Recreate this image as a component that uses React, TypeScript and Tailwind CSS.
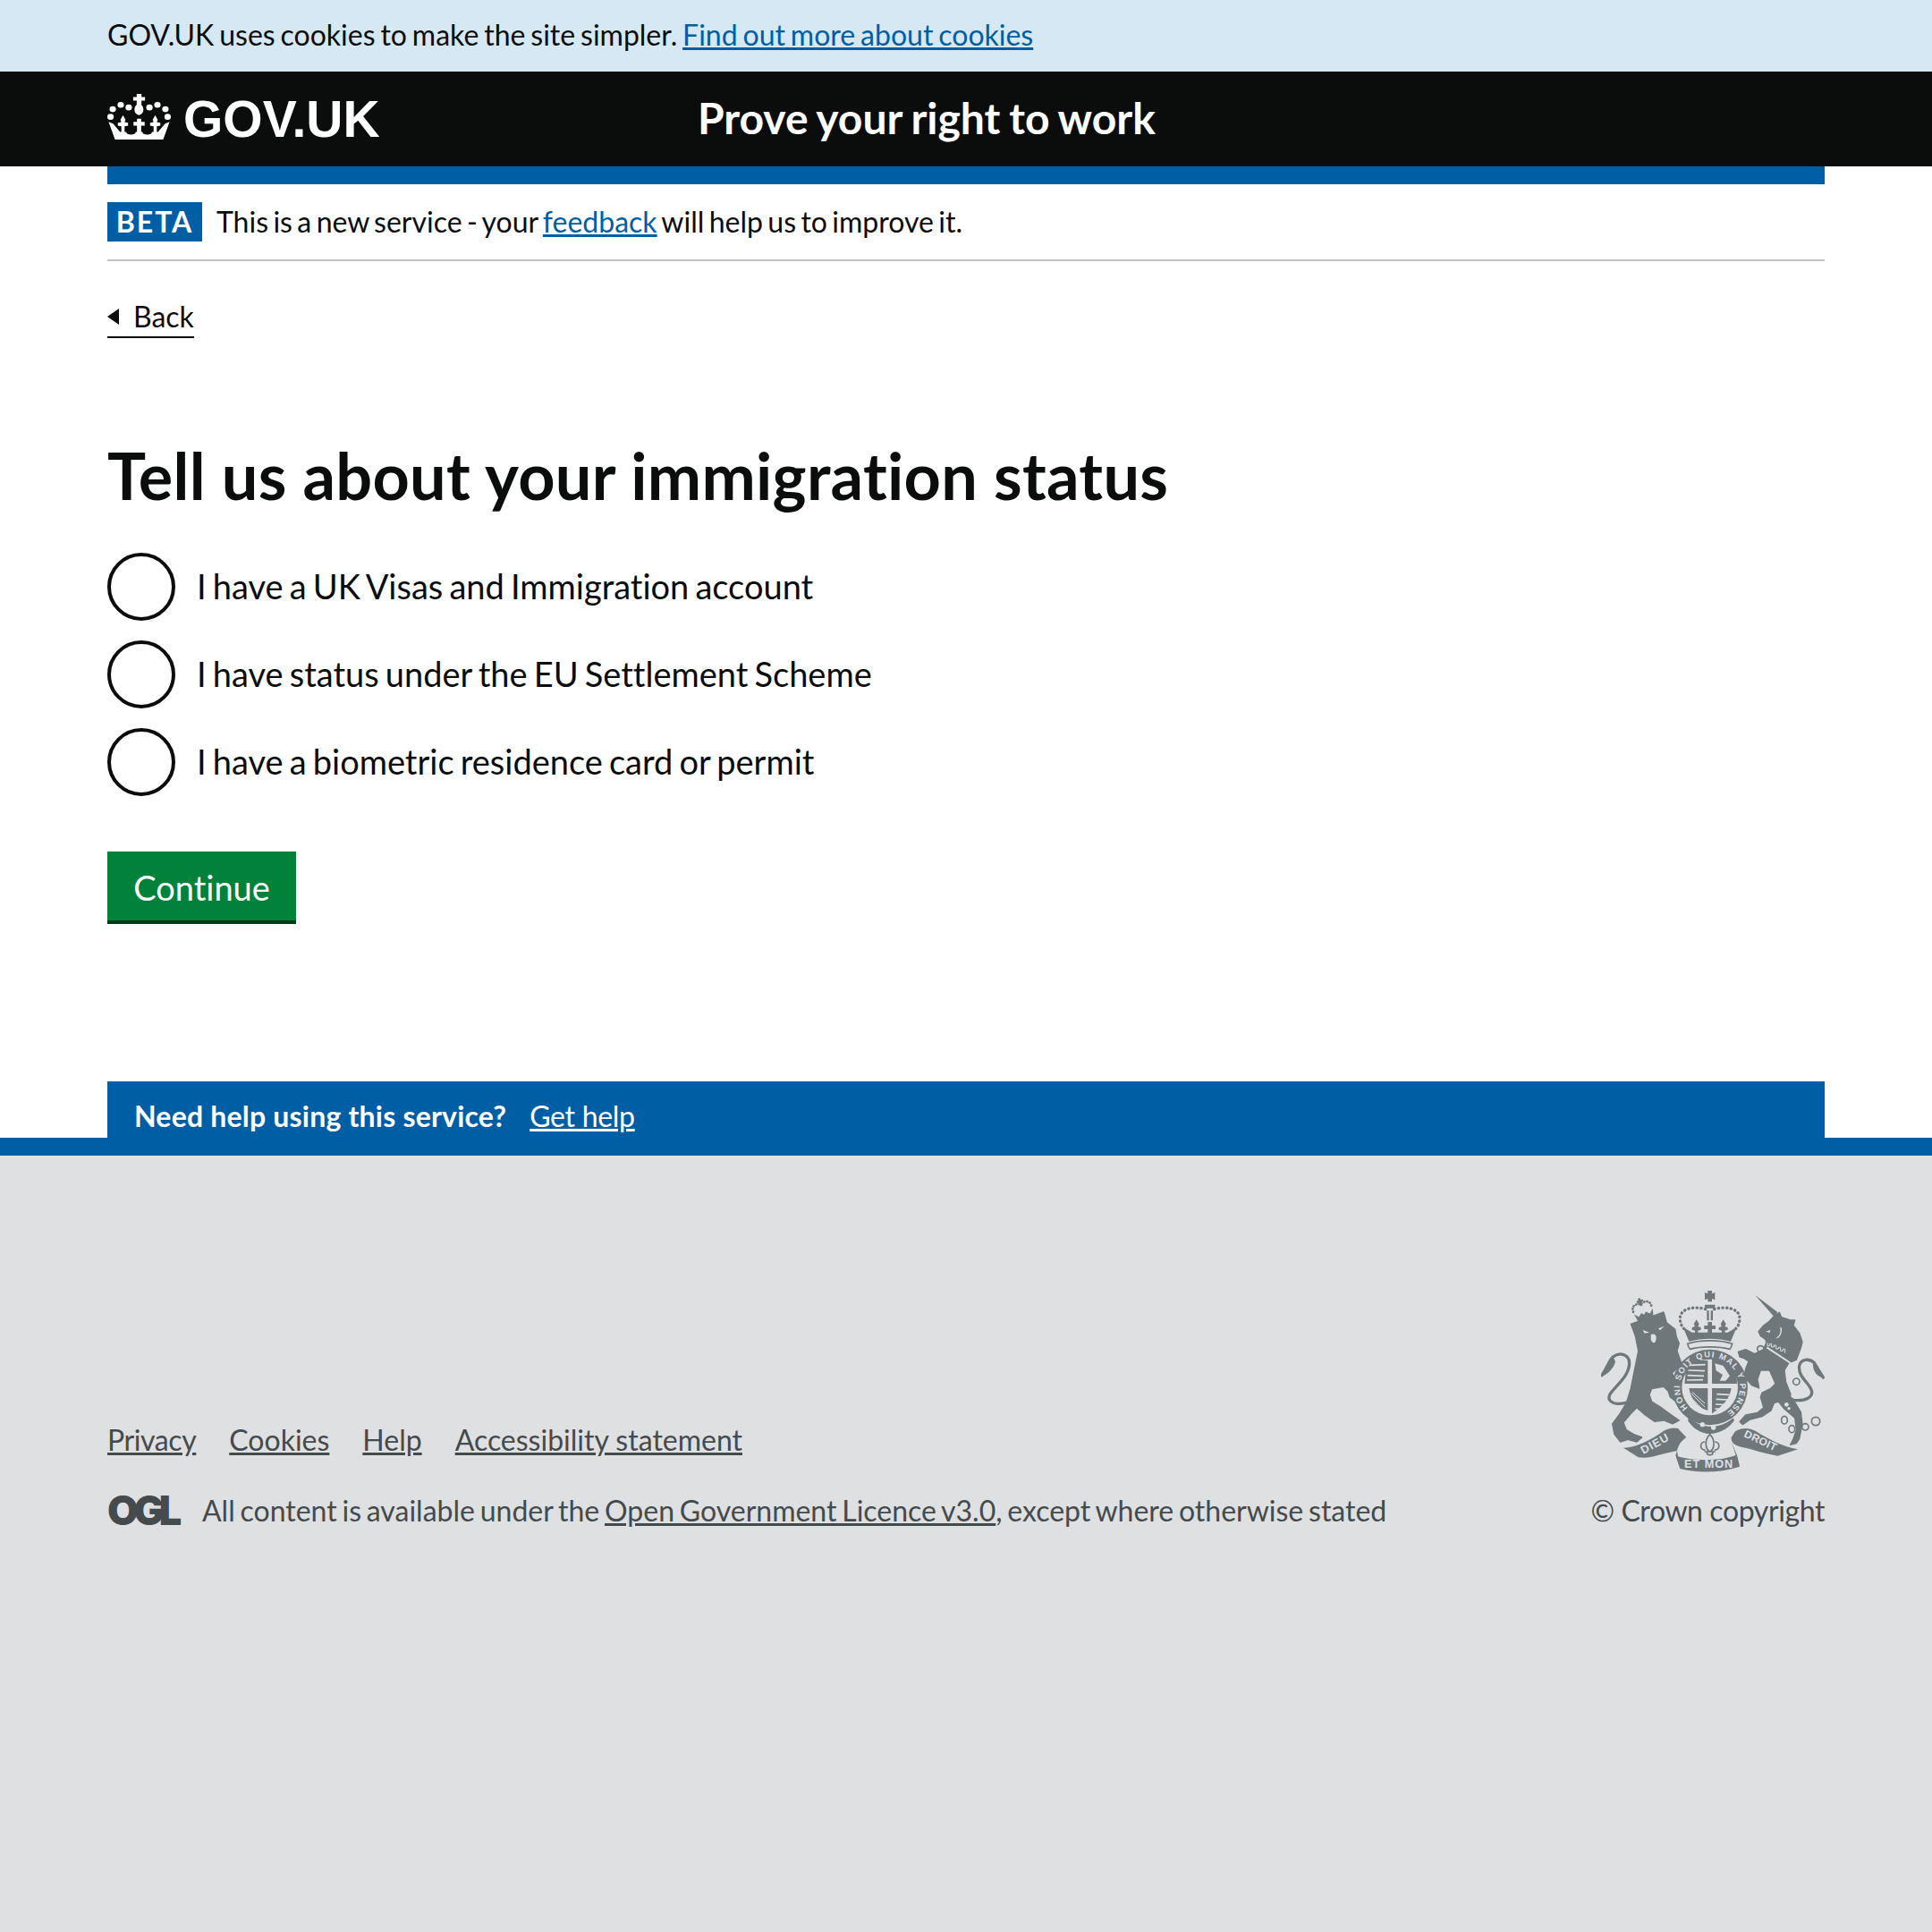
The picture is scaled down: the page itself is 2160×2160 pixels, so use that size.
const font = "font-['Lato','Liberation_Sans',sans-serif]";
const grey = '#6f777b';
const bg = '#dee0e2';

function Crown() {
  return (
    <svg viewBox="23 20 199 155" preserveAspectRatio="none" className="w-[71px] h-[51px] mb-[5px] fill-white" aria-hidden="true">
      {/* top cross and orb */}
      <path d="M115 20h15v11h11v12h-11v14h-15V43h-11V31h11z" />
      <ellipse cx="122" cy="73" rx="14" ry="19" />
      {/* pearls */}
      <circle cx="90" cy="66" r="10" />
      <circle cx="65" cy="57" r="10" />
      <circle cx="40" cy="72" r="10" />
      <circle cx="33" cy="98" r="10" />
      <circle cx="155" cy="66" r="10" />
      <circle cx="180" cy="57" r="10" />
      <circle cx="205" cy="72" r="10" />
      <circle cx="212" cy="98" r="10" />
      {/* base */}
      <path d="M27 115l14 6 22 28h119l22-28 14-6-20 60H47z" />
      <ellipse cx="97" cy="150" rx="15" ry="8" fill="#0b0c0c" />
      <ellipse cx="148" cy="150" rx="15" ry="8" fill="#0b0c0c" />
      {/* fleurs */}
      <path d="M72 92l8 16-3 8 11 2v10l-11 2v22H67v-22l-11-2v-10l11-2-3-8z" />
      <path d="M173 92l8 16-3 8 11 2v10l-11 2v22h-10v-22l-11-2v-10l11-2-3-8z" />
      <path d="M116 104h13v11h11v13h-11v24h-13v-24h-11v-13h11z" />
    </svg>
  );
}

function Crest() {
  return (
    <svg viewBox="90 35 750 615" className="w-[250px] h-[205px]" fill={grey} aria-hidden="true">
      {/* lion, traced in the left half */}
      <g transform="translate(60 15)" strokeLinejoin="round">
        <g transform="rotate(-18 172 95)">
          <path d="M140 92l12 14 12-10 8 8 8-8 12 10 13-14-6 32h-53z" />
          <path d="M140 84c-2-24 22-24 32-16 10-8 34-8 32 16" fill="none" stroke={grey} strokeWidth="8" strokeLinecap="round" strokeDasharray="1 9" />
          <path d="M168 46h8v7h7v8h-7v12h-8V61h-7v-8h7z" />
        </g>
        <path
          d="M130 135L240 95 250 130 278 152 283 178 292 200 285 225 300 268 268 300 300 350 308 385 285 398 262 380 255 360 240 345 200 352 192 372 200 395 232 415 262 437 292 458 270 470 240 458 210 462 178 440 150 415 135 430 105 465 115 490 140 505 167 515 150 530 120 522 95 530 75 505 68 470 90 440 115 400 130 350 142 290 155 225 145 175z"
          stroke={grey}
          strokeWidth="4"
        />
        <path d="M170 155l22 8-16 3zM222 150l20-8-14 14zM197 170c10-4 18 0 18 10s-3 18-8 18-10-8-10-16z" fill={bg} />
        <path d="M125 395C85 410 45 400 60 370 80 340 125 310 125 265 125 240 95 225 70 245 55 260 50 285 30 310" fill="none" stroke={grey} strokeWidth="10" />
        <path d="M30 312c12-25 22-45 42-65l6 14c-6 22-22 40-48 51z" />
      </g>

      {/* unicorn, traced in the right half */}
      <g transform="translate(420 15)" strokeLinejoin="round">
        <path d="M187 38l75 57-12 15z" />
        <path
          d="M250 108L268 96 275 112 305 122 320 122 315 140 335 165 345 195 340 215 325 255 300 265 285 290 290 330 310 380 340 430 345 470 335 520 325 535 305 540 315 520 325 490 320 450 285 420 265 395 250 400 240 425 210 445 170 455 145 472 135 462 155 440 195 432 215 415 205 380 210 365 240 350 255 335 235 290 205 290 195 320 200 350 175 340 150 310 155 285 165 260 150 250 135 245 130 228 155 220 185 235 215 220 225 195 220 185 205 175 198 160 215 140 235 125z"
          stroke={grey}
          strokeWidth="4"
        />
        <path d="M226 213l80 53" fill="none" stroke={bg} strokeWidth="6" />
        <path d="M228 198v10h8v-7h6v11h8v-6h7v12h8v-5h7v12h8v-6h7v13" fill="none" stroke={bg} strokeWidth="3" />
        <path d="M222 160l16-5-2 9zM270 145c5 15 0 28-14 38 12 0 22-15 20-35z" fill={bg} />
        <circle cx="315" cy="375" r="8" fill={bg} />
        <circle cx="292" cy="405" r="7" fill={bg} />
        <circle cx="300" cy="418" r="5" fill={bg} />
        <path d="M315 390c40 5 70-10 60-35-10-25-45-45-40-80 5-25 35-25 50-10 10 15 20 35 33 53" fill="none" stroke={grey} strokeWidth="10" />
        <path d="M420 318c-18-5-32-15-38-35l-2-16c14 12 30 30 40 51z" />
        <g fill="none" stroke={grey} strokeWidth="5">
          <ellipse cx="205" cy="218" rx="11" ry="10" />
          <ellipse cx="180" cy="302" rx="10" ry="12" />
          <ellipse cx="325" cy="328" rx="11" ry="11" />
          <ellipse cx="285" cy="457" rx="10" ry="13" />
          <ellipse cx="310" cy="487" rx="10" ry="12" />
          <ellipse cx="355" cy="480" rx="11" ry="11" />
          <ellipse cx="390" cy="461" rx="14" ry="14" />
        </g>
      </g>

      {/* royal crown */}
      <path d="M448 38h14v10l10-4v25l-10-4v10h-14V65l-10 4V44l10 4z" />
      <path d="M438 85h34v12h-34zM445 105h7v33h-7zM458 105h7v33h-7z" />
      <path d="M440 100C400 88 352 98 355 135c2 20 10 26 14 32M470 100c40-12 88-2 85 35-2 20-10 26-14 32" fill="none" stroke={grey} strokeWidth="10" strokeLinecap="round" strokeDasharray="1 13" />
      <path d="M365 160l30 18h120l30-18-20 48c-45-12-95-12-140 0z" />
      <path d="M410 135l9 15-4 8 10 3v8l-10 3v15h-10v-15l-10-3v-8l10-3-4-8zM500 135l9 15-4 8 10 3v8l-10 3v15h-10v-15l-10-3v-8l10-3-4-8zM448 143h14v12h12v12h-12v15h-14v-15h-12v-12h12z" />
      <path d="M380 216c40-14 110-14 150 0-2 8-3 12-8 18-35-10-100-10-134 0-5-6-6-10-8-18z" fill="none" stroke={grey} strokeWidth="5" />

      {/* shield and garter */}
      <circle cx="455" cy="362" r="127" />
      <circle cx="455" cy="362" r="94" fill={bg} />
      <path d="M378 272h70v78h-78zM462 268h78l6 82h-84zM385 365h63v75c-30-8-55-30-63-75zM462 365h65c-6 35-28 60-65 85z" />
      <g fill="none" stroke={bg} strokeWidth="5">
        <path d="M385 288l55-2M382 305l56 2M380 322l55 2M378 338l54-1" />
        <path d="M478 385l42 2M476 402l40 2M474 419l34 2M472 434l28 2" />
        <path d="M392 382l46 46M392 396l40 42M396 378l42 38" strokeWidth="3" />
      </g>
      <path d="M472 282l28 8 22 34-14 16h-20l10-20-22-14z" fill={bg} />
      <text fontFamily="'Liberation Sans',sans-serif" fontWeight="700" fontSize="28" fill={bg}>
        <path id="garter" d="M381 431A101 101 0 1 1 517 442" fill="none" />
        <textPath href="#garter" textLength="490" lengthAdjust="spacing">HONI SOIT QUI MAL Y PENSE</textPath>
      </text>
      <path d="M385 462c40 42 105 42 148 3l4 8c-10 15-40 45-82 45-30 0-60-20-74-45z" />
      <circle cx="430" cy="487" r="8" fill={bg} />
      <circle cx="467" cy="497" r="8" fill={bg} />

      {/* fleur de lis */}
      <g fill="none" stroke={grey} strokeWidth="5">
        <path d="M455 520c-20 20-15 50 0 58 15-8 20-38 0-58zM438 545c-18 0-18 30 2 27M472 545c18 0 18 30-2 27M437 578h36M445 580c0 12 20 12 20 0" />
      </g>

      {/* motto ribbon */}
      <path d="M165 565c40 0 90-25 135-57 20-10 35-11 48-8l28 30c-14 10-26 22-31 45-25 5-45 10-65 15-25 8-45 10-65 7z" />
      <path d="M340 590c40 20 160 22 205-2l10 40c-65 22-145 22-200 7z" />
      <path d="M540 510c25-15 50-12 70 0 40 25 90 53 140 60l-68 22c-42-7-82-22-122-30-20-4-35-14-33-32z" />
      <path d="M345 575l-5 15 15 45zM527 545l18 43 10 40z" />
      <g fontFamily="'Liberation Sans',sans-serif" fontWeight="700" fill={bg}>
        <text x="369" y="633" fontSize="38" letterSpacing="3">ET MON</text>
        <text transform="translate(232 587) rotate(-29)" fontSize="38" letterSpacing="3">DIEU</text>
        <text transform="translate(567 527) rotate(25)" fontSize="36" letterSpacing="1">DROIT</text>
      </g>
    </svg>
  );
}

export default function App() {
  return (
    <div className={`min-h-[2160px] flex flex-col bg-white text-[#0b0c0c] [font-variant-ligatures:none] ${font}`}>
      <div className="h-20 bg-[#d5e8f3] px-[120px] pb-0.5 flex items-center text-[32px] [word-spacing:-2.3px]">
        <p>
          GOV.UK uses cookies to make the site simpler.{' '}
          <a className="text-[#005ea5] underline">Find out more about cookies</a>
        </p>
      </div>

      <header className="h-[106px] bg-[#0b0c0c] px-[120px] flex items-center text-white">
        <div className="w-[660px] flex items-center gap-[14px]">
          <Crown />
          <span className="font-['Liberation_Sans',sans-serif] font-bold text-[57px] leading-none">GOV.UK</span>
        </div>
        <span className="text-[48px] font-bold pb-0.5 [word-spacing:-1.7px]">Prove your right to work</span>
      </header>

      <main className="mx-[120px] flex flex-col">
        <div className="h-5 bg-[#005ea5]" />
        <div className="h-[86px] border-b-2 border-[#bfc1c3] flex items-start pt-5 gap-4">
          <strong className="h-11 w-[106px] bg-[#005ea5] text-white text-[32px] tracking-[2px] flex items-center justify-center">
            BETA
          </strong>
          <p className="text-[32px] leading-[44px] [word-spacing:-2.8px]">
            This is a new service - your <a className="text-[#005ea5] underline">feedback</a> will help us to improve it.
          </p>
        </div>

        <a className="mt-[44px] self-start h-[42px] pb-1 text-[32px] leading-[36px] border-b-2 border-[#0b0c0c] flex items-center gap-4">
          <span className="w-0 h-0 border-y-[9px] border-y-transparent border-r-[13px] border-r-[#0b0c0c]" />
          Back
        </a>

        <h1 className="mt-[113px] text-[72px] leading-[80px] font-bold tracking-[0.3px]">Tell us about your immigration status</h1>

        <div className="mt-[47px] flex flex-col gap-[22px]">
          {[
            'I have a UK Visas and Immigration account',
            'I have status under the EU Settlement Scheme',
            'I have a biometric residence card or permit',
          ].map((label) => (
            <label key={label} className="flex items-center gap-6 h-[76px] text-[38px] [word-spacing:-2.6px]">
              <span className="w-[76px] h-[76px] rounded-full border-4 border-[#0b0c0c]" />
              <span className="pb-0.5">{label}</span>
            </label>
          ))}
        </div>

        <button className="mt-[62px] self-start w-[211px] h-[81px] pt-[3px] bg-[#00823b] border-b-4 border-[#003618] text-white text-[38px]">
          Continue
        </button>

        <div className="mt-[176px] h-[63px] bg-[#005ea5] px-[30px] pt-[15px] flex items-start gap-[26px] text-white text-[32px]">
          <strong className="tracking-[0.2px]">Need help using this service?</strong>
          <a className="underline tracking-[-0.3px]">Get help</a>
        </div>
      </main>

      <footer className="flex-1 bg-[#dee0e2] border-t-[20px] border-[#005ea5] px-[120px] pt-[150px] text-[#454a4c] text-[32px]">
        <div className="flex items-end justify-between">
          <div>
            <div className="flex gap-[37px]">
              <a className="underline tracking-[-0.4px]">Privacy</a>
              <a className="underline">Cookies</a>
              <a className="underline">Help</a>
              <a className="underline">Accessibility statement</a>
            </div>
            <div className="mt-[31px] flex items-center gap-6">
              <span className="w-[82px] font-['Inter',sans-serif] font-black text-[45px] leading-[36px] tracking-[-5.5px]">OGL</span>
              <p className="[word-spacing:-2.4px]">
                All content is available under the <a className="underline">Open Government Licence v3.0</a>, except where otherwise stated
              </p>
            </div>
          </div>
          <div className="flex flex-col items-end gap-[18px]">
            <Crest />
            <span className="tracking-[-0.4px]">© Crown copyright</span>
          </div>
        </div>
      </footer>
    </div>
  );
}
